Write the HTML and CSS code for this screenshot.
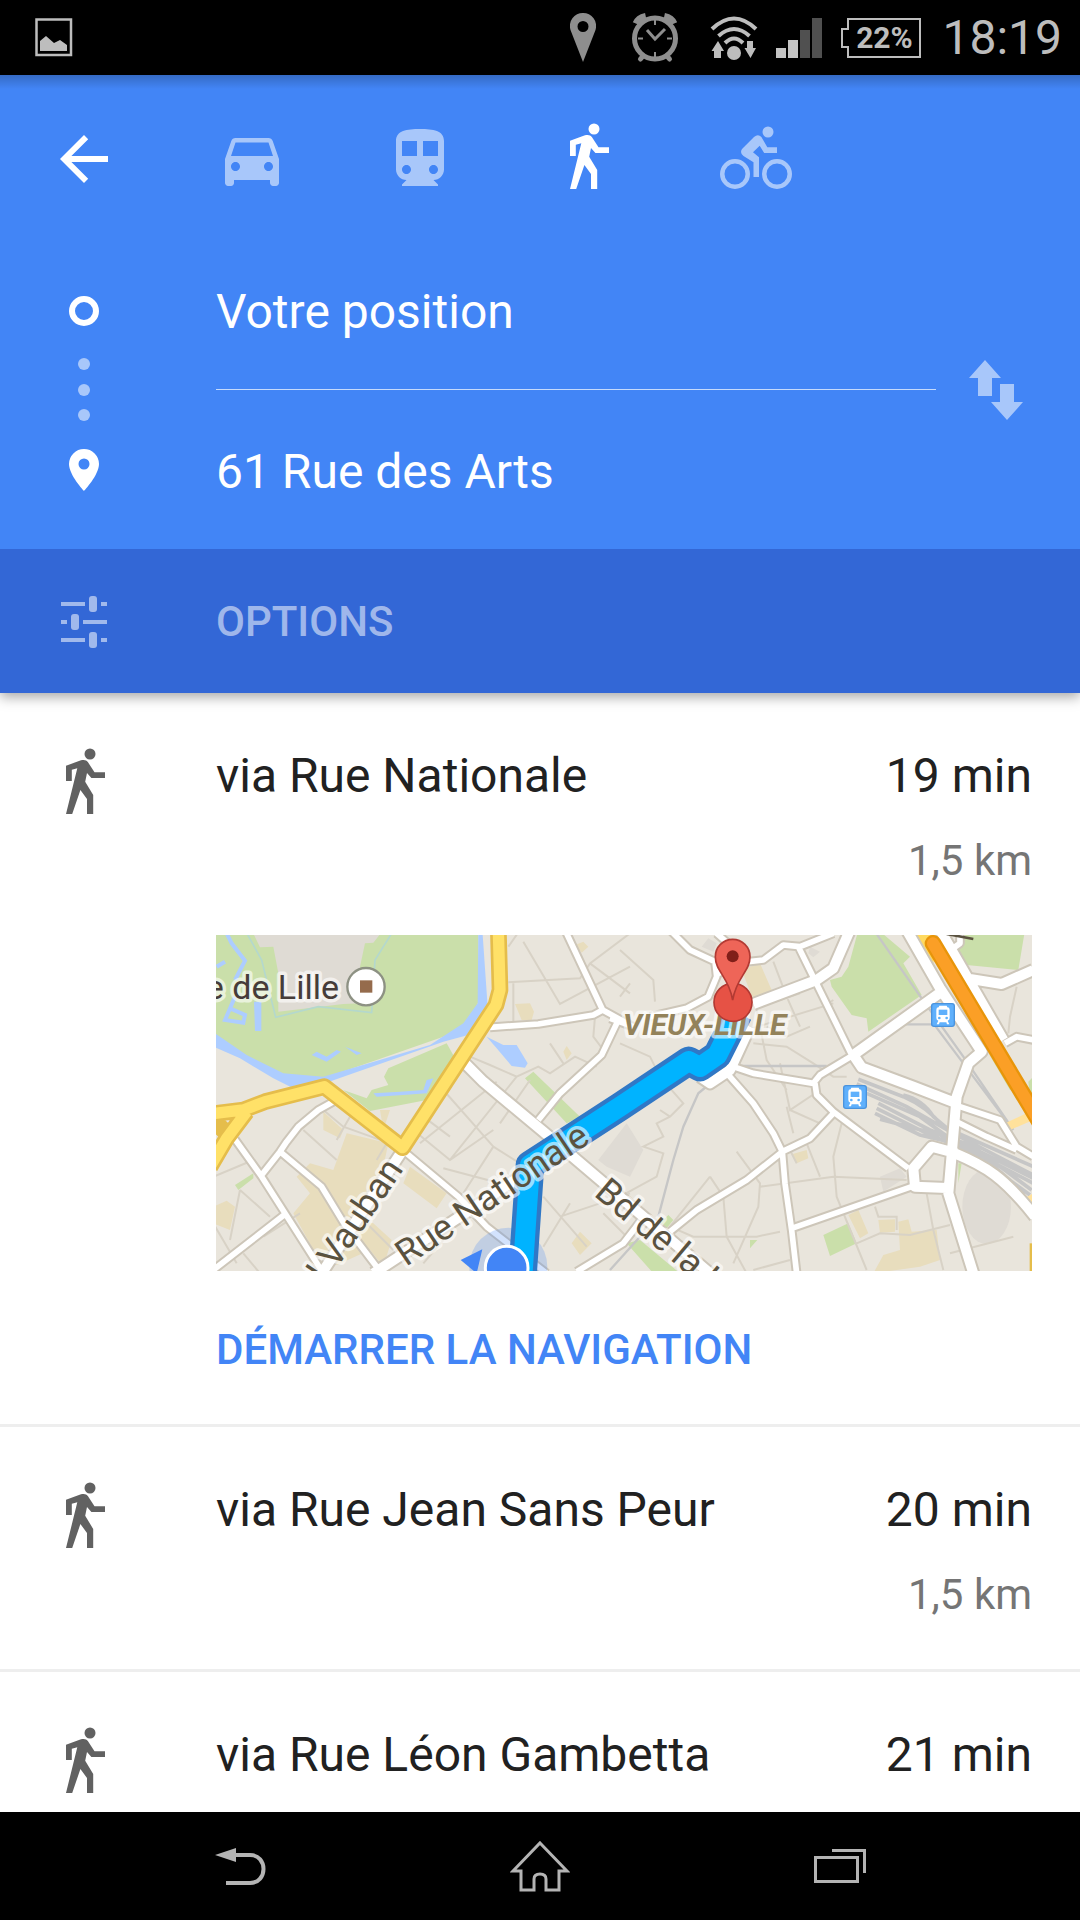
FILE: index.html
```html
<!DOCTYPE html>
<html lang="fr">

<head>
    <meta charset="UTF-8">
    <meta name="viewport" content="width=device-width, initial-scale=1.0">
    <title>Itinéraire à pied</title>
    <link rel="stylesheet" href="styles.css">
</head>

<body>
    <svg class="defs" width="0" height="0" aria-hidden="true">
        <symbol id="walk" viewBox="0 0 72 72">
            <circle cx="42" cy="6" r="5.5"/>
            <path d="M18 17.7L33 12.3C36 11.4 38.500 12 40 14.200L46.500 24.300H57V30H43.400L39 25L37.200 33.700L45.200 47V66H39V51L32.400 42L24.200 66H18L29.300 20.300L23.800 21.700V33H18Z"/>
        </symbol>
        <symbol id="station" viewBox="0 0 72 72">
            <rect x="2" y="2" width="68" height="68" rx="7" fill="#5fb0fc" stroke="#4a93dd" stroke-width="4"/>
            <path fill="#fff" d="M25 8H47L49 13Q56 13 56 20V45Q56 52 50 53L55 64H48L46 58H26L24 64H17L22 53Q16 52 16 45V20Q16 13 23 13Z"/>
            <path fill="#5fb0fc" d="M23 20H49V36H23Z"/>
            <circle cx="25" cy="45" r="4" fill="#5fb0fc"/>
            <circle cx="47" cy="45" r="4" fill="#5fb0fc"/>
        </symbol>
    </svg>

    <div class="status">
        <svg class="status-picture" width="38" height="39" viewBox="0 0 38 39">
            <path fill="none" stroke="#bdbdbd" stroke-width="2.500" d="M1.500 1.500H36V37H1.500Z"/>
            <path fill="#bdbdbd" d="M5 23L11 18L19 25L25 22L32 27V33H5Z"/>
        </svg>
        <svg width="26" height="50" viewBox="0 0 26 50" fill="#8e8e8e">
            <path fill-rule="evenodd" d="M13 0A13 13 0 0 1 25.500 17L13 49L.5 17A13 13 0 0 1 13 0ZM13 8A5.500 5.500 0 1 0 13 19A5.500 5.500 0 1 0 13 8Z"/>
        </svg>
        <svg width="78" height="50" viewBox="-2 0 78 50" fill="none" stroke="#8e8e8e">
            <circle cx="39" cy="25.500" r="20.500" stroke-width="5"/>
            <path stroke-width="9" d="M21 11Q23 6 30 4.500M57 11Q55 6 48 4.500"/>
            <path stroke-width="5" stroke-linecap="round" d="M27 43L24.500 46M51 43L53.500 46"/>
            <path stroke-width="2" d="M39 7V12M39 39V44M22 25.500H27M51 25.500H56"/>
            <path stroke-width="3" d="M31 17L39 26L49 16"/>
        </svg>
        <svg width="48" height="44" viewBox="0 0 48 44" fill="none" stroke="#bdbdbd" stroke-width="4">
            <path d="M2 13Q24 -8 46 13M8.500 20Q24 6 39.500 20M15 27Q24 18 33 27"/>
            <g fill="#bdbdbd" stroke="none">
                <circle cx="24" cy="37" r="7"/>
                <path d="M8 25L14 35H11V42H4V35H1.500ZM37 25H43V32H46L40.500 42L34.500 32H37Z"/>
            </g>
        </svg>
        <svg width="46" height="40" viewBox="0 0 46 40">
            <path fill="#c4c4c4" d="M0 30H10V40H0ZM12 22H22V40H12Z"/>
            <path fill="#505050" d="M24 12H34V40H24ZM36 0H46V40H36Z"/>
        </svg>
        <div class="battery">
            <svg width="82" height="42" viewBox="0 0 82 42" fill="none" stroke="#bdbdbd" stroke-width="2">
                <path d="M8 2H80V40H8V30H2V12H8Z"/>
            </svg>
            <span>22%</span>
        </div>
        <time>18:19</time>
    </div>

    <header>
        <nav class="modes">
            <button aria-label="Retour" class="on">
                <svg viewBox="0 0 24 24"><path d="M20 11H7.800l5.600-5.600L12 4l-8 8 8 8 1.400-1.400L7.800 13H20v-2z"/></svg>
            </button>
            <button aria-label="Voiture">
                <svg viewBox="0 0 24 24"><path d="M18.900 6c-.2-.6-.8-1-1.400-1h-11c-.7 0-1.200.4-1.400 1L3 12v8c0 .5.500 1 1 1h1c.6 0 1-.5 1-1v-1h12v1c0 .5.500 1 1 1h1c.5 0 1-.5 1-1v-8l-2.100-6zM6.500 16c-.8 0-1.500-.7-1.500-1.500S5.700 13 6.500 13s1.500.7 1.500 1.500S7.300 16 6.500 16zm11 0c-.8 0-1.500-.7-1.500-1.500s.7-1.500 1.500-1.500 1.500.7 1.500 1.500-.7 1.500-1.500 1.500zM5 11l1.500-4.500h11L19 11H5z"/></svg>
            </button>
            <button aria-label="Transports en commun">
                <svg viewBox="0 0 24 24"><path d="M12 2c-4.400 0-8 .5-8 4v9.500C4 17.400 5.600 19 7.500 19L6 20.500v.5h12v-.5L16.500 19c1.900 0 3.500-1.600 3.500-3.500V6c0-3.500-3.600-4-8-4zM7.500 17c-.8 0-1.500-.7-1.500-1.500S6.700 14 7.500 14s1.500.7 1.500 1.500S8.300 17 7.500 17zm3.500-6H6V6h5v5zm5.500 6c-.8 0-1.500-.7-1.500-1.500s.7-1.500 1.500-1.500 1.500.7 1.500 1.500-.7 1.500-1.500 1.500zm1.500-6h-5V6h5v5z"/></svg>
            </button>
            <button aria-label="À pied" class="on">
                <svg><use href="#walk"/></svg>
            </button>
            <button aria-label="Vélo">
                <svg viewBox="0 0 72 72">
                    <circle cx="48" cy="9" r="5.500"/>
                    <path d="M22 26L34 14Q38 10.500 41.400 14L47.300 24.300H57V30H44.200L39.700 22.700L33 29.300L39 34.300V54H33.500V39.300L23.500 33Q19.500 30 22 26Z"/>
                    <path fill-rule="evenodd" d="M15 36A15 15 0 1 0 15 66A15 15 0 1 0 15 36ZM15 40.500A10.500 10.500 0 1 1 15 61.500A10.500 10.500 0 1 1 15 40.500ZM57 36A15 15 0 1 0 57 66A15 15 0 1 0 57 36ZM57 40.500A10.500 10.500 0 1 1 57 61.500A10.500 10.500 0 1 1 57 40.500Z"/>
                </svg>
            </button>
        </nav>

        <form class="fields">
            <svg class="rail" width="72" height="316" viewBox="0 0 72 316" fill="#fff">
                <circle cx="36" cy="78" r="12" fill="none" stroke="#fff" stroke-width="6"/>
                <g opacity=".54">
                    <circle cx="36" cy="131" r="6"/>
                    <circle cx="36" cy="157" r="6"/>
                    <circle cx="36" cy="182" r="6"/>
                </g>
                <path fill-rule="evenodd" d="M36 216A15 15 0 0 1 51 231C51 242 36 258 36 258C36 258 21 242 21 231A15 15 0 0 1 36 216ZM36 225.500A5.500 5.500 0 1 0 36 236.500A5.500 5.500 0 1 0 36 225.500Z"/>
            </svg>
            <div class="inputs">
                <input type="text" value="Votre position" aria-label="Départ">
                <input type="text" value="61 Rue des Arts" aria-label="Arrivée">
            </div>
            <button type="button" class="swap" aria-label="Inverser">
                <svg viewBox="0 0 72 72"><path d="M25 5L41 23H32V41H18V23H9ZM40 29H54V47H63L47 65L31 47H40Z"/></svg>
            </button>
        </form>

        <button class="options">
            <svg viewBox="0 0 72 72">
                <path d="M13 17H37V21H13ZM53 17H59V21H53ZM13 35H19V39H13ZM35 35H59V39H35ZM13 53H37V57H13ZM53 53H59V57H53Z"/>
                <rect x="41" y="11" width="8" height="16" rx="3"/>
                <rect x="23" y="29" width="8" height="16" rx="3"/>
                <rect x="41" y="47" width="8" height="16" rx="3"/>
            </svg>
            <span>OPTIONS</span>
        </button>
    </header>

    <main>
        <section class="route">
            <svg class="route-icon"><use href="#walk"/></svg>
            <h2>via Rue Nationale</h2>
            <div class="cost">
                <p class="time">19 min</p>
                <p class="distance">1,5 km</p>
            </div>

            <svg class="map" viewBox="0 0 816 336" preserveAspectRatio="xMidYMid slice" role="img" aria-label="Carte du trajet">
                <defs>
                    <g id="streets">
                        <path d="M1065 0L1178 240L1260 285M840 292L985 282L1150 255L1178 240M1225 270L1175 375L1050 490L985 570M375 512L325 540L265 590L230 635L210 665L155 735M75 628L155 740L340 1030M210 665L335 770L405 885L515 1030M10 1020L222 855M590 670L745 800L830 890L1010 1030M1100 1025L1240 940L1290 875"/>
                        <path transform="translate(1230 0)" d="M155 5L210 60L285 95L290 140L265 200L200 235L90 260M290 10L335 50M290 135L340 100L430 90L490 45L540 50L640 10M535 50L700 385M1010 575L1100 620L1190 660M1020 530L1140 570L1190 650L1240 680M340 410L400 430L580 460L600 435L700 375M585 460L590 495L640 545L865 715M325 435L400 520L460 610L487 665L495 760L515 900L530 1030M640 550L570 625L487 665L380 750L230 840L150 905M515 895L875 770M1155 340L1190 320L1240 330M985 65L1020 40V0M-30 265L40 290"/>
                    </g>
                    <g id="avenues">
                        <path d="M765 400L820 455L1000 605L1500 1030M575 665L335 1030M490 1030L750 860L960 720"/>
                        <path transform="translate(1230 0)" d="M690 0L640 115L590 150L400 222M390 290L330 420L270 460L240 440M860 0L960 175L1085 365L1045 400L1010 500L985 790L1063 1040M700 375L965 185M700 375L725 412L880 470L1010 520M1000 668C1100 710 1150 740 1245 860M1000 775L885 770L880 715L935 650L1010 670M960 0L1150 330M1040 145L1145 162L1240 120"/>
                    </g>
                </defs>

                <g transform="translate(-6 -5) scale(.33333)">
                    <rect width="2500" height="1100" fill="#e9e5dc"/>

                    <!-- parks -->
                    <g fill="#cadfaa">
                        <path d="M0 0H805V215C790 260 760 290 715 315L500 390L340 445L220 440L110 385L0 310Z"/>
                        <path d="M535 415L710 340L735 385L650 510L480 543L400 480L470 505L485 480L535 465L522 440Z"/>
                        <path d="M945 445L970 425L1110 560L1070 580ZM75 765L130 730V745L85 780Z"/>
                        <path transform="translate(1230 0)" d="M715 0H775L870 80L850 100L905 195L745 305L740 265L695 255L635 170L630 150L665 140L685 110ZM1010 0H1215L1195 120L1040 105L1015 80ZM610 915L685 880L710 940L630 978ZM20 940L60 930L180 1030H100ZM120 880L145 855L160 870L140 895ZM390 930H412L390 955ZM1015 700H1025L1015 760ZM1100 360L1240 570V440L1225 455L1230 500L1170 480Z"/>
                    </g>

                    <!-- buildings and squares -->
                    <g fill="#dfdbd4">
                        <path d="M125 0H520L490 38L465 40L450 110V220L400 222L205 245V130L190 50L150 52Z"/>
                        <path d="M1165 690L1250 580L1300 660L1260 740L1190 710Z"/>
                        <path transform="translate(1230 0)" d="M245 50L265 25L290 40L280 65ZM570 50L600 65L580 82L565 70ZM780 740L840 715L860 740L790 785Z"/>
                        <ellipse cx="2330" cy="830" rx="73" ry="112"/>
                    </g>
                    <g fill="#e8ddbd">
                        <path d="M410 610L535 640L520 710L430 870L490 880L545 930L520 1010L480 960L380 1005L310 960L250 850L300 790L260 740L300 700L370 720ZM340 545L400 600L390 625L340 600ZM510 540H540L520 600ZM600 710L710 790L680 835L580 760ZM915 222L960 220L972 245L965 270H935ZM1095 45L1120 35L1135 50L1115 68ZM1060 365L1070 348L1085 370L1070 390ZM10 830L50 812L75 830L60 900L10 880ZM1085 940L1110 905L1145 940L1110 975Z"/>
                        <path transform="translate(1230 0)" d="M365 120L420 100L455 180L400 210ZM685 855L715 840L745 910L720 925ZM775 870L825 868V905L780 908ZM835 875L865 868L875 905L950 900L960 990L900 1010L760 1030L790 975L840 960ZM518 672L560 660L565 685L530 700Z"/>
                    </g>

                    <!-- water -->
                    <g fill="#adcdff">
                        <path d="M0 300L110 375L220 430L340 440L660 345L760 280L803 220L805 0H817L832 215L830 300L700 335L400 440L345 460L250 475L190 445L90 385L0 345ZM305 375L320 365L350 380L380 360L393 365L350 395ZM405 350L455 370L440 375ZM490 490L570 485L640 480L650 450L670 445L650 490L580 495L500 500ZM830 320L880 345H920L953 400L945 413L905 408L860 355ZM132 215H154V303H135Z"/>
                        <path fill="none" stroke="#adcdff" stroke-width="12" d="M45 0L65 40L105 92L75 150M20 110L45 95M75 200L45 270L100 278L105 255L60 235"/>
                        <path fill="none" stroke="#b4d8cd" stroke-width="5" d="M105 0L155 90L197 262L325 230L485 248L495 90L545 10"/>
                    </g>

                    <!-- lanes -->
                    <g fill="none" stroke="#d8d2c6" stroke-width="6">
                        <path d="M930 0L895 50M940 35L1050 222L1260 110M895 157L1110 145L1140 100L1260 10M1140 100L1260 190M910 160V280M1155 260L1150 320L1180 360M780 380L840 405L920 440L985 410L1020 430L1095 380L1160 410M1020 340L1060 400M860 455L630 640M920 440L720 690M850 600L720 690L610 600M640 560L720 620M850 650L760 790M850 650L930 700M700 715L870 760M1000 800L1130 950M1080 820L1000 950M1050 860L1260 790M960 450L870 580M960 570L850 490M700 480L850 650M340 540L400 590L540 640M420 560L380 630M280 600L380 690M90 780L60 930M10 740L130 690M90 780L180 860M10 880L80 1000M160 920L270 850M100 970L150 1030M530 640L500 690M460 870L550 960M1180 850L1260 930M640 1000L700 930"/>
                        <path transform="translate(1230 0)" d="M0 60L100 150L105 215M0 200L30 160M0 340L90 380L120 440L190 520L150 560L110 580L130 620L70 650L130 670L110 740L0 800M150 560L120 540M460 95L500 200L540 290M380 300L640 220M410 240L440 390L500 480M400 340L500 350L580 400L640 440L680 440M480 400L510 540L600 480M500 530L520 610M510 540L600 580M350 665L420 760L415 830L340 1000M270 740L150 890L220 920H410L480 905M270 740L310 800L320 920L380 1030M420 770L640 740L860 750M530 700L510 660M560 640L600 740M665 580L640 680L650 800L740 1020M765 830L775 860H830V900M710 940L780 910L870 915L990 885M920 790L940 900L970 1020M990 970L1180 920M1190 170L1170 260L1165 310M400 1020L510 990M420 230L540 190M640 210L610 230M440 290L500 320L570 290"/>
                    </g>

                    <!-- railways -->
                    <g transform="translate(1230 0)" fill="none" stroke="#c6c6c6">
                        <path stroke-width="7" d="M765 5L905 205L1030 380L1180 600M940 280L1150 560M340 408H620M265 465L235 490L190 590L160 690L115 860M-30 1020L60 920M840 283H940"/>
                        <path stroke-width="11" d="M715 448L850 500Q920 530 970 590L1240 710M710 462L860 530L1000 610L1240 735M740 490L900 560L1010 640L1240 760M775 520L930 600L1060 650L1235 780M770 535L920 610L1060 670L1230 795M765 550L900 615L1050 650L1240 745M780 568L960 615L1100 690L1215 790M850 495Q910 510 940 560L1000 610"/>
                    </g>
                    <path fill="#ffe19b" d="M2385 580L2470 540V570L2400 600ZM2435 810L2470 790V830Z"/>
                    <path fill="#ffda60" d="M2110 0H2180L2170 100Z"/>

                    <use href="#streets" class="street casing"/>
                    <use href="#avenues" class="avenue casing"/>
                    <use href="#streets" class="street"/>
                    <use href="#avenues" class="avenue"/>

                    <!-- main roads -->
                    <g fill="none" stroke-linejoin="round">
                        <path stroke="#e5bd4b" stroke-width="50" d="M865 0L870 180L858 225L578 653L343 470L165 515L100 540L0 552M0 710L50 625L110 545M0 560L50 610"/>
                        <path stroke="#ffe168" stroke-width="34" d="M865 0L870 180L858 225L578 653L343 470L165 515L100 540L0 552M0 710L50 625L110 545"/>
                        <path stroke="#e8950a" stroke-width="50" stroke-linecap="round" d="M2169 40L2500 595"/>
                        <path stroke="#fb9f26" stroke-width="36" stroke-linecap="round" d="M2169 40L2500 595"/>
                        <path stroke="#e5bd4b" stroke-width="8" d="M2463 940V1030"/>
                        <path stroke="#5a523f" stroke-width="8" d="M2210 12L2290 27"/>
                    </g>

                    <!-- walking route -->
                    <circle cx="895" cy="1010" r="117" fill="#4285f6" opacity=".24"/>
                    <g fill="none" stroke-linejoin="round">
                        <path stroke="#3078c6" stroke-width="86" d="M937 1040L960 705L1230 530L1436 393L1470 411L1522 375L1585 250"/>
                        <path stroke="#00b3ff" stroke-width="60" d="M937 1040L960 705L1230 530L1436 393L1470 411L1522 375L1585 250"/>
                    </g>
                    <path fill="#4285f6" d="M752 990L817 958L800 1030Z"/>
                    <circle cx="890" cy="1013" r="64" fill="#4285f6" stroke="#fff" stroke-width="9"/>

                    <circle cx="468" cy="170" r="56" fill="#fff" stroke="#8d9183" stroke-width="7"/>
                    <path fill="#956b4c" d="M450 151H487V188H450Z"/>
                    <use href="#station" x="2163" y="219" width="72" height="72"/>
                    <use href="#station" x="1899" y="465" width="72" height="72"/>
                </g>

                <g class="labels">
                    <text class="poi" x="123" y="64" text-anchor="end">e de Lille</text>
                    <text transform="translate(188 234) rotate(-56)" text-anchor="end">Bd Vauban</text>
                    <text transform="translate(190 332) rotate(-34)">Rue Nationale</text>
                    <text transform="translate(377 260) rotate(40)">Bd de la L</text>
                    <text class="district" x="407" y="100">VIEUX-LILLE</text>
                </g>

                <g transform="translate(404 -5) scale(.33333)" fill="#e65245" stroke="#b23a33" stroke-width="5">
                    <circle cx="339" cy="217" r="57"/>
                    <path d="M338 28A52 52 0 0 1 390 80C390 125 350 140 338 210C326 140 286 125 286 80A52 52 0 0 1 338 28Z" fill="#ee6558"/>
                    <circle cx="338" cy="79" r="18" fill="#801f19" stroke="none"/>
                </g>
            </svg>

            <a class="start" href="#">DÉMARRER LA NAVIGATION</a>
        </section>

        <section class="route">
            <svg class="route-icon"><use href="#walk"/></svg>
            <h2>via Rue Jean Sans Peur</h2>
            <div class="cost">
                <p class="time">20 min</p>
                <p class="distance">1,5 km</p>
            </div>
        </section>

        <section class="route">
            <svg class="route-icon"><use href="#walk"/></svg>
            <h2>via Rue Léon Gambetta</h2>
            <div class="cost">
                <p class="time">21 min</p>
            </div>
        </section>
    </main>

    <footer>
        <button aria-label="Précédent">
            <svg width="60" height="60" viewBox="0 0 60 60">
                <path fill="#b4b4b4" d="M5 19L26 12V26Z"/>
                <path fill="none" stroke="#b4b4b4" stroke-width="4" d="M25 19H40C58 19 58 47 40 47H16"/>
            </svg>
        </button>
        <button aria-label="Accueil">
            <svg width="60" height="60" viewBox="0 0 60 60" fill="none" stroke="#b4b4b4" stroke-width="3">
                <path d="M30 7L57 35H49V54H36V43Q36 38 30 38Q24 38 24 43V54H11V35H3Z"/>
            </svg>
        </button>
        <button aria-label="Applications récentes">
            <svg width="60" height="60" viewBox="0 0 60 60" fill="none" stroke="#b4b4b4">
                <path stroke-width="3" d="M5.500 21.500H47.500V45.500H5.500Z"/>
                <path stroke-width="3" d="M22 14.500H54.500V37"/>
            </svg>
        </button>
    </footer>
</body>

</html>
```

FILE: styles.css
```css
* {
    box-sizing: border-box;
}

body {
    margin: 0;
    height: 100vh;
    display: flex;
    flex-direction: column;
    font-family: Roboto, "Noto Sans", sans-serif;
    background-color: #fff;
    color: #212121;
}

svg {
    display: block;
}

.defs {
    position: absolute;
}

button {
    border: none;
    padding: 0;
    background: none;
    font-family: inherit;
}

/* Android status bar */
.status {
    flex: none;
    height: 75px;
    padding: 0 18px 0 35px;
    display: flex;
    align-items: center;
    gap: 18px;
    background-color: #000;
    color: #bdbdbd;
}

.status-picture {
    margin-right: auto;
}

.status time {
    padding-left: 2px;
    font-size: 48px;
    line-height: 56px;
}

.battery {
    display: grid;
    align-items: center;
    justify-items: center;
}

.battery > * {
    grid-area: 1 / 1;
}

.battery span {
    padding-left: 6px;
    font-size: 30px;
    font-weight: 700;
}

/* blue header */
header {
    flex: none;
    position: relative;
    background-color: #4285f6;
    background-image: linear-gradient(rgba(0, 0, 0, 0.2), rgba(0, 0, 0, 0));
    background-size: 100% 14px;
    background-repeat: no-repeat;
    box-shadow: 0 4px 12px rgba(0, 0, 0, 0.35);
}

.modes {
    display: flex;
    gap: 96px;
    padding: 48px 48px 38px;
}

.modes svg,
.swap svg,
.options svg,
.route-icon {
    width: 72px;
    height: 72px;
}

.modes svg,
.swap svg,
.options svg {
    fill: #fff;
}

.modes button,
.swap {
    opacity: 0.54;
}

.modes .on {
    opacity: 1;
}

.fields {
    display: flex;
    align-items: flex-start;
    padding: 0 48px;
}

.rail {
    flex: none;
    margin-right: 96px;
}

.inputs {
    flex: 1;
    margin-right: 24px;
}

.inputs input {
    display: block;
    width: 100%;
    height: 157px;
    border: none;
    border-bottom: 1px solid rgba(255, 255, 255, 0.7);
    padding: 0;
    background: none;
    color: #fff;
    font-family: inherit;
    font-size: 48px;
    outline: none;
}

.inputs input:last-child {
    height: 159px;
    padding-top: 3px;
    border-bottom: none;
}

.swap {
    align-self: center;
}

.options {
    width: 100%;
    height: 144px;
    padding: 0 48px;
    display: flex;
    align-items: center;
    gap: 96px;
    background-color: #3367d6;
    color: rgba(255, 255, 255, 0.54);
    font-size: 42px;
    font-weight: 500;
}

.options svg {
    opacity: 0.54;
}

/* list of routes */
main {
    flex: 1;
    min-height: 0;
    overflow-y: auto;
    scrollbar-width: none;
}

.route {
    display: grid;
    grid-template-columns: 72px 1fr auto;
    column-gap: 96px;
    align-items: start;
    padding: 55px 48px 50px;
    border-bottom: 3px solid #eee;
}

.route-icon {
    fill: #616161;
}

.route h2,
.time {
    margin: 0;
    font-size: 48px;
    font-weight: 400;
    line-height: 56px;
}

.cost {
    text-align: right;
}

.distance {
    margin: 33px 0 0;
    color: #757575;
    font-size: 42px;
    line-height: 48px;
}

.map {
    grid-column: 2 / -1;
    width: 100%;
    height: 336px;
    margin-top: 50px;
}

.start {
    grid-column: 2 / -1;
    margin-top: 55px;
    color: #4285f6;
    font-size: 42px;
    font-weight: 500;
    line-height: 48px;
    text-decoration: none;
}

/* map drawing */
.street,
.avenue {
    fill: none;
    stroke: #fff;
    stroke-linejoin: round;
}

.street {
    stroke-width: 17;
}

.avenue {
    stroke-width: 30;
}

.casing {
    stroke: #cdc6b9;
}

.street.casing {
    stroke-width: 29;
}

.avenue.casing {
    stroke-width: 42;
}

.labels {
    fill: #5a523f;
    stroke: rgba(255, 255, 255, 0.6);
    stroke-width: 7px;
    stroke-linejoin: round;
    paint-order: stroke;
    font-size: 36px;
}

.labels .poi {
    fill: #463c39;
    font-size: 34px;
}

.labels .district {
    fill: #93825a;
    font-size: 30px;
    font-style: italic;
    font-weight: 700;
}

/* Android navigation bar */
footer {
    flex: none;
    height: 108px;
    padding: 0 90px;
    display: grid;
    grid-template-columns: 1fr 1fr 1fr;
    align-items: center;
    justify-items: center;
    background-color: #000;
}
```
